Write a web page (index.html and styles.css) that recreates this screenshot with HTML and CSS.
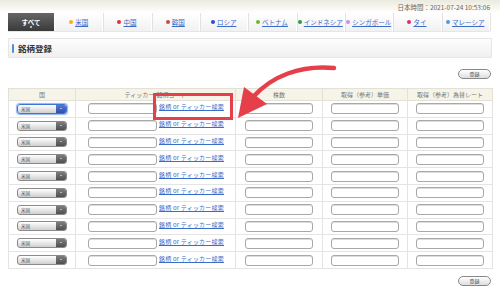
FILE: index.html
```html
<!DOCTYPE html>
<html lang="ja">
<head>
<meta charset="utf-8">
<link rel="stylesheet" href="styles.css">
</head>
<body>
<div class="page">
  <div class="topbar"><span class="clock">日本時間：2021-07-24 10:53:06</span></div>
  <nav class="nav">
    <span class="tab all">すべて</span>
    <a class="tab"><i class="dot c1"></i>米国</a>
    <a class="tab"><i class="dot c2"></i>中国</a>
    <a class="tab"><i class="dot c3"></i>韓国</a>
    <a class="tab"><i class="dot c4"></i>ロシア</a>
    <a class="tab"><i class="dot c5"></i>ベトナム</a>
    <a class="tab"><i class="dot c6"></i>インドネシア</a>
    <a class="tab"><i class="dot c7"></i>シンガポール</a>
    <a class="tab"><i class="dot c8"></i>タイ</a>
    <a class="tab"><i class="dot c9"></i>マレーシア</a>
  </nav>
  <div class="heading"><span class="mark"></span>銘柄登録</div>
  <div class="actions"><span class="btn">登録</span></div>
  <table class="grid">
    <colgroup><col class="w1"><col class="w2"><col class="w3"><col class="w4"><col class="w5"></colgroup>
    <thead>
      <tr><th>国</th><th>ティッカー/銘柄コード</th><th>株数</th><th>取得（参考）単価</th><th>取得（参考）為替レート</th></tr>
    </thead>
    <tbody id="rows"></tbody>
  </table>
  <div class="actions bottom"><span class="btn">登録</span></div>
  <div class="callout"></div>
  <svg class="arrow" width="500" height="292" viewBox="0 0 500 292">
    <path d="M334 68 C300 65 272 76 253 97" fill="none" stroke="#e5404a" stroke-width="4.5" stroke-linecap="round"/>
    <polygon points="238,118 244,87 267,104" fill="#e5404a"/>
  </svg>
</div>
<script>
var tb = document.getElementById('rows');
for (var i = 0; i < 10; i++) {
  var tr = document.createElement('tr');
  tr.innerHTML =
    '<td><span class="sel' + (i === 0 ? ' focus' : '') + '"><span class="val">米国</span><span class="arr"></span></span></td>' +
    '<td><div class="code"><span class="inp"></span><a class="lnk">銘柄 or ティッカー検索</a></div></td>' +
    '<td><span class="inp"></span></td>' +
    '<td><span class="inp"></span></td>' +
    '<td><span class="inp"></span></td>';
  tb.appendChild(tr);
}
</script>
</body>
</html>
```
FILE: styles.css
```css
* { box-sizing: border-box; }
html, body { margin: 0; padding: 0; background: #fff; }
body { font-family: "Noto Sans CJK JP", "Noto Sans", sans-serif; color: #444; }
.page { position: relative; width: 500px; height: 292px; overflow: hidden; }

.topbar {
  height: 13px;
  background: linear-gradient(#ecebe0, #f7f6f0 60%, #fff);
  display: flex; justify-content: flex-end; align-items: center;
  padding-right: 10px;
}
.clock { font-size: 6.5px; line-height: 7px; color: #666; padding-top: 2px; }

.nav {
  display: flex; height: 19px; margin: 0 10px 0 8px;
  background: linear-gradient(#fff, #f1f1f1);
  border-bottom: 1px solid #e6e6e6;
}
.tab {
  flex: 1; display: flex; align-items: center; justify-content: center;
  font-size: 6.5px; color: #3a6cc8; text-decoration: underline;
  border-right: 1px solid #fff; box-shadow: 1px 0 0 #e2e2e2;
  gap: 1px; white-space: nowrap;
}
.tab.all {
  flex: 0 0 47px; background: linear-gradient(#666, #3a3a3a);
  color: #fff; text-decoration: none; font-size: 6.5px; font-weight: bold;
  position: relative; box-shadow: none;
}
.tab.all::after {
  content: ""; position: absolute; bottom: 3px; left: 50%; margin-left: -1px;
  width: 2px; height: 2px; background: #ddd; border-radius: 1px;
}
.dot { width: 4px; height: 4px; border-radius: 50%; display: inline-block; margin-right: 1px; }
.c1 { background: #f2b21f; }
.c2 { background: #e03232; }
.c3 { background: #c64a4a; }
.c4 { background: #3246d8; }
.c5 { background: #6cba2c; }
.c6 { background: #2f9a3a; }
.c7 { background: #d68ae6; }
.c8 { background: #d6306e; }
.c9 { background: #4d9be0; }

.heading {
  margin: 6px 8px 0; height: 20px;
  border: 1px solid #e6e6e6; border-radius: 1px;
  background: linear-gradient(#fdfdfd, #f0f0f0);
  display: flex; align-items: center; gap: 4px; padding-left: 3px;
  font-size: 8.5px; font-weight: bold; color: #333;
}
.mark { width: 2px; height: 9px; background: #4d8fd8; border-radius: 1px; }

.actions { display: flex; justify-content: flex-end; margin-top: 11px; padding-right: 9px; }
.actions.bottom { margin-top: 7px; }
.btn {
  width: 33px; height: 10px; border: 1px solid #888; border-radius: 5px;
  background: linear-gradient(#fff, #dedede);
  font-size: 5px; line-height: 8px; text-align: center; color: #444;
}

.grid { margin: 9px 8px 0; width: 484px; border-collapse: collapse; table-layout: fixed; }
.w1 { width: 67px; } .w2 { width: 160px; } .w3 { width: 87px; } .w4 { width: 85px; } .w5 { width: 85px; }
.grid th {
  height: 12px; background: #f6f4e9; font-weight: normal; line-height: 10px;
  font-size: 6px; color: #777; border: 1px solid #e3e1d6; padding: 0;
}
.grid td {
  height: 16.8px; border: 1px solid #e4e4e4; padding: 0; text-align: center; vertical-align: middle;
  font-size: 0; line-height: 0;
}
.grid tr:first-child td { border-top-color: #e3e1d6; }

.sel {
  display: inline-flex; width: 50px; height: 10px; vertical-align: middle;
  border: 1px solid #8a8a8a; border-radius: 3px; overflow: hidden;
  background: linear-gradient(#fff, #e8e8e8 50%, #cfcfcf);
}
.sel .val { flex: 1; text-align: left; font-size: 4.5px; line-height: 8px; padding-left: 3px; color: #555; }
.sel .arr {
  width: 10px; position: relative;
  background: linear-gradient(#7d7d7d, #505050);
}
.sel .arr::after {
  content: ""; position: absolute; left: 4px; top: 3px;
  border-left: 1.2px solid transparent; border-right: 1.2px solid transparent; border-top: 1.6px solid #fff;
}
.sel.focus { border-color: #3d74d8; box-shadow: 0 0 1px 1px #8fb4f2; }
.sel.focus .arr { background: linear-gradient(#5a78d0, #2f4fa8); }

.inp {
  display: inline-block; width: 68px; height: 11px; vertical-align: middle;
  border: 1px solid #a8a8a8; border-radius: 3px; background: #fff;
  box-shadow: inset 0 1px 0 #ddd;
}
.code { display: flex; align-items: center; padding-left: 12px; gap: 2px; }
.code .inp { width: 69px; }
.lnk {
  font-size: 6px; color: #3a6cc8; text-decoration: underline; white-space: nowrap;
  line-height: 8px; margin-top: -3px; letter-spacing: 0.2px;
}

.callout {
  position: absolute; left: 153px; top: 93px; width: 80px; height: 27px;
  border: 3px solid #e5404a;
}
.arrow { position: absolute; left: 0; top: 0; pointer-events: none; }
```
